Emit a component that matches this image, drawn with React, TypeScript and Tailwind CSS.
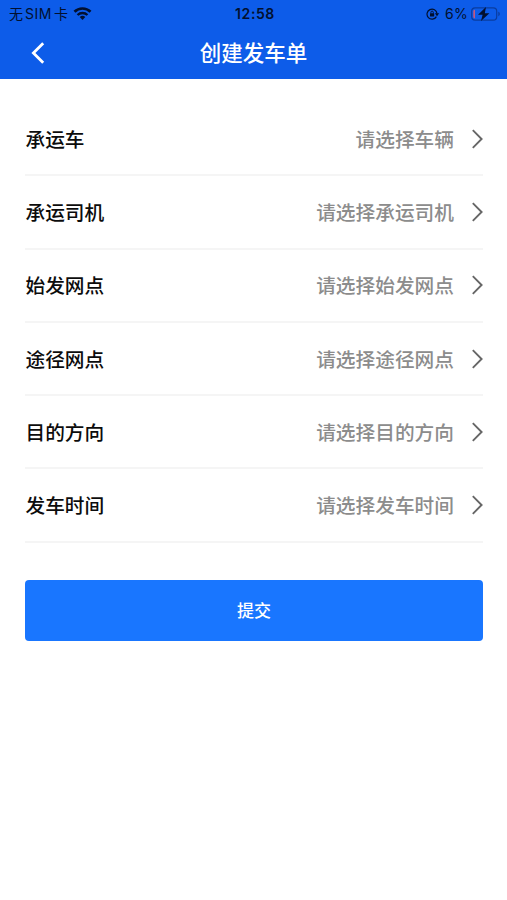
interface FormField {
  label: string
  placeholder: string
}

const fields: FormField[] = [
  { label: "承运车", placeholder: "请选择车辆" },
  { label: "承运司机", placeholder: "请选择承运司机" },
  { label: "始发网点", placeholder: "请选择始发网点" },
  { label: "途径网点", placeholder: "请选择途径网点" },
  { label: "目的方向", placeholder: "请选择目的方向" },
  { label: "发车时间", placeholder: "请选择发车时间" },
]

function WifiIcon() {
  return (
    <svg width="19" height="13" viewBox="0 0 18 13" fill="none" stroke="#02102f">
      <path d="M1 4.8a11.4 11.4 0 0 1 16 0" strokeWidth="2.7" />
      <path d="M4 8a7.2 7.2 0 0 1 10 0" strokeWidth="2.3" />
      <path d="M9 13 6.2 10.1a4 4 0 0 1 5.6 0Z" fill="#02102f" stroke="none" />
    </svg>
  )
}

function RotationLockIcon() {
  return (
    <svg width="14" height="12" viewBox="0 0 14 12" fill="none" stroke="#02102f">
      <path d="M10.4 8.6A5 5 0 1 1 11 5.6" strokeWidth="1.2" />
      <path d="M8.8 5.3h4.4L11 8.2Z" fill="#02102f" stroke="none" />
      <rect x="4" y="5.2" width="4.2" height="3.2" rx="0.5" fill="#02102f" stroke="none" />
      <path d="M4.9 5.6V4.3a1.2 1.2 0 0 1 2.4 0v1.3" strokeWidth="0.9" />
    </svg>
  )
}

function BatteryIcon() {
  return (
    <svg width="30" height="14" viewBox="0 0 30 14" fill="none">
      <rect x="0.7" y="0.9" width="25" height="12.2" rx="3.4" stroke="#0a3c9f" strokeWidth="1.2" />
      <path d="M27.3 4.8c2 .6 2 3.800 0 4.400Z" fill="#0a3c9f" />
      <path d="M4 2.700v8.600c-1.200 0-1.700-.7-1.700-1.800v-5C2.300 3.400 2.800 2.700 4 2.700Z" fill="#c4577f" />
      <path d="M15 0 7 7.800h4.600L10 14 18.400 6.200h-4.600Z" fill="#02102f" />
    </svg>
  )
}

function StatusBar() {
  return (
    <div className="grid h-[27px] grid-cols-[1fr_auto_1fr] items-center pr-[6px] pl-[9px] text-[#02102f]">
      <div className="flex items-center gap-[5px]">
        <span className="text-[14px] leading-none whitespace-nowrap">
          无<span className="mx-[2px] tracking-[0.5px]">SIM</span>卡
        </span>
        <WifiIcon />
      </div>
      <span className="text-[14px] leading-none font-semibold tracking-[0.6px]">12:58</span>
      <div className="flex items-center justify-end">
        <RotationLockIcon />
        <span className="mr-[3px] ml-[5px] text-[14px] leading-none tracking-[0.3px]">6%</span>
        <BatteryIcon />
      </div>
    </div>
  )
}

function NavBar() {
  return (
    <div className="grid h-[52px] grid-cols-[1fr_auto_1fr] items-center">
      <button className="mb-px ml-[31px] w-[14px]" aria-label="返回">
        <svg width="14" height="22" viewBox="0 0 14 22" fill="none" stroke="white" strokeWidth="2.800">
          <path d="M12.200 1.200 2.400 11l9.800 9.800" />
        </svg>
      </button>
      <h1 className="pt-[2px] text-[21.500px] leading-none font-medium text-white">创建发车单</h1>
    </div>
  )
}

function FieldRow({ label, placeholder }: FormField) {
  return (
    <button className="flex h-[73.300px] w-full items-center border-b-2 border-[#f5f5f5] text-[19.700px] leading-none font-medium">
      <span className="pt-[4px] pl-[0.500px] text-[#0c0c0c]">{label}</span>
      <span className="ml-auto pt-[4px] text-[#8c8c8c]">{placeholder}</span>
      <svg className="ml-[18px]" width="11" height="20" viewBox="0 0 11 20" fill="none" stroke="#666" strokeWidth="1.900">
        <path d="m.8 1.200 8.800 8.800L.8 18.800" />
      </svg>
    </button>
  )
}

export default function App() {
  return (
    <div className="min-h-[900px] w-full bg-white font-['Inter','Noto_Sans_CJK_SC',sans-serif]">
      <header className="h-[79px] bg-[#0d5ce9]">
        <StatusBar />
        <NavBar />
      </header>
      <main className="pt-[24px] pr-[24px] pl-[25px]">
        {fields.map((field) => (
          <FieldRow key={field.label} {...field} />
        ))}
        <button className="mt-[37px] flex h-[61px] w-full items-center justify-center rounded-[4px] bg-[#1976ff] pt-[3px] text-[17px] leading-none font-medium text-white">
          提交
        </button>
      </main>
    </div>
  )
}
